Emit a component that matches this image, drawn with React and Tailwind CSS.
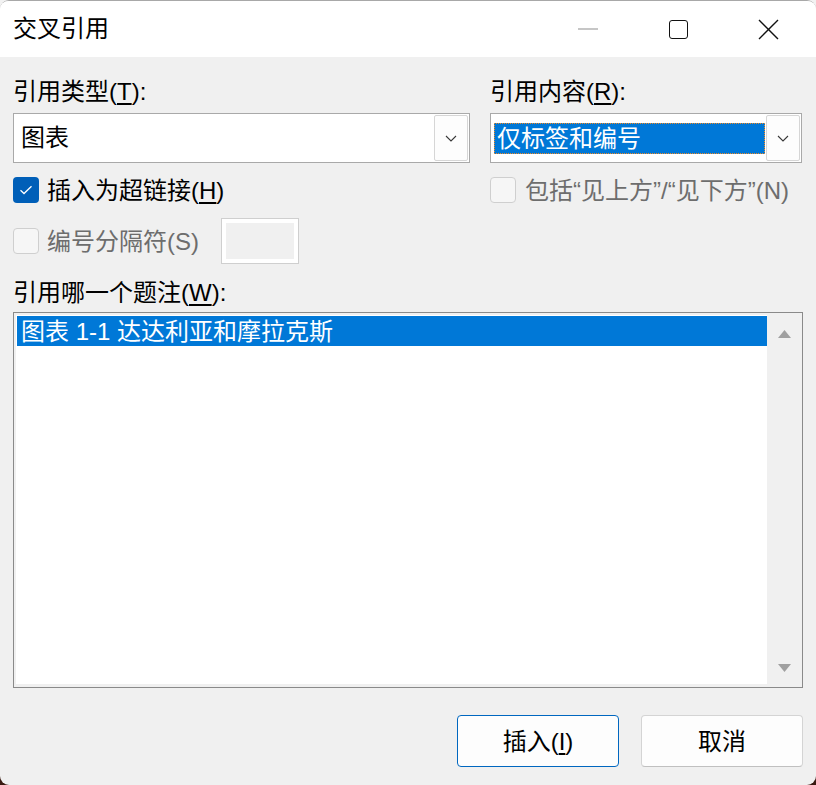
import React from "react";

function Chevron() {
  return (
    <svg width="12" height="7" viewBox="0 0 12 7" fill="none">
      <path d="M1 1 L6 6 L11 1" stroke="#3a3a3a" strokeWidth="1.1" />
    </svg>
  );
}

function ComboButton() {
  return (
    <div className="flex h-[46px] w-[34px] items-center justify-center rounded-[2px] border border-[#d6d6d6] bg-[#fdfdfd]">
      <Chevron />
    </div>
  );
}

function CheckBox({ checked }) {
  if (checked) {
    return (
      <div className="flex h-[26px] w-[26px] shrink-0 items-center justify-center rounded-[4px] bg-[#005fb8]">
        <svg width="14" height="10" viewBox="0 0 14 10" fill="none">
          <path d="M1.5 5.2 L5 8.5 L12.5 1.2" stroke="#ffffff" strokeWidth="1.3" />
        </svg>
      </div>
    );
  }
  return <div className="h-[26px] w-[26px] shrink-0 rounded-[4px] border border-[#cfcfcf] bg-[#f6f6f6]" />;
}

export default function App() {
  return (
    <div className="h-[785px] w-[816px] bg-linear-to-b from-[#f2f2f2] from-50% to-[#3a1a12] to-50% font-['Liberation_Sans','Noto_Sans_CJK_SC',sans-serif] text-[24px] text-black">
      <div className="flex h-full flex-col overflow-hidden rounded-[9px] border-t border-[#a8a8a8] bg-[#f0f0f0]">
        {/* Title bar */}
        <div className="flex h-[56px] shrink-0 items-center bg-white pl-[13px]">
          <div className="leading-[30px]">交叉引用</div>
          <div className="ml-auto flex h-full items-center">
            <div className="flex w-[92px] items-center justify-center pl-[4px]">
              <div className="h-[1.5px] w-[20px] bg-[#c6c6c6]" />
            </div>
            <div className="flex w-[92px] items-center justify-center">
              <div className="h-[19px] w-[19px] rounded-[3px] border-[1.6px] border-[#111]" />
            </div>
            <div className="flex w-[92px] items-center justify-center pr-[4px]">
              <svg width="21" height="21" viewBox="0 0 21 21" fill="none">
                <path d="M1 1 L20 20 M20 1 L1 20" stroke="#111" strokeWidth="1.4" />
              </svg>
            </div>
          </div>
        </div>

        {/* Body */}
        <div className="flex flex-1 flex-col px-[13px] pt-[20px]">
          <div className="grid grid-cols-[457px_312px] gap-x-[20px]">
            <div className="leading-[29px]">
              引用类型(<span className="underline underline-offset-[3px]">T</span>):
            </div>
            <div className="leading-[29px]">
              引用内容(<span className="underline underline-offset-[3px]">R</span>):
            </div>

            {/* Combo 1 */}
            <div className="mt-[7px] flex h-[50px] items-center border border-[#a9a9a9] bg-white pl-[7px] pr-[1px]">
              <div className="flex-1 leading-[30px]">图表</div>
              <ComboButton />
            </div>
            {/* Combo 2 */}
            <div className="mt-[7px] flex h-[50px] items-center border border-[#a9a9a9] bg-white pl-[3px] pr-[1px]">
              <div className="mr-[1px] flex h-[31px] flex-1 items-center border border-dotted border-[#f08a24] bg-[#0078d7] pl-[2px] leading-[29px] text-white">
                仅标签和编号
              </div>
              <ComboButton />
            </div>

            {/* Checkbox row */}
            <div className="mt-[14px] flex h-[26px] items-center gap-[8px]">
              <CheckBox checked />
              <div className="leading-[29px]">
                插入为超链接(<span className="underline underline-offset-[3px]">H</span>)
              </div>
            </div>
            <div className="mt-[14px] flex h-[26px] items-center gap-[9px]">
              <CheckBox />
              <div className="leading-[29px] text-[#6d6d6d]">包括“见上方”/“见下方”(N)</div>
            </div>

            {/* Separator row */}
            <div className="mt-[15px] flex h-[46px] items-center">
              <div className="flex w-[208px] items-center gap-[8px]">
                <CheckBox />
                <div className="leading-[29px] text-[#6d6d6d]">编号分隔符(S)</div>
              </div>
              <div className="h-[46px] w-[78px] border border-[#cfcfcf] bg-white p-[4px]">
                <div className="h-full w-full bg-[#f0f0f0]" />
              </div>
            </div>
            <div />
          </div>

          <div className="mt-[14px] leading-[29px]">
            引用哪一个题注(<span className="underline underline-offset-[3px]">W</span>):
          </div>

          {/* List box */}
          <div className="mt-[5px] flex h-[376px] border border-[#8a8a8a] bg-[#f0f0f0] pb-[3px] pl-[2px] pt-[2px]">
            <div className="flex-1 bg-white pl-[1px] pt-[1px]">
              <div className="flex h-[30px] items-center bg-[#0078d7] pl-[4px] leading-[29px] text-white">
                图表 1-1 达达利亚和摩拉克斯
              </div>
            </div>
            <div className="flex w-[35px] flex-col items-center justify-between pb-[12px] pt-[15px]">
              <svg width="13" height="8" viewBox="0 0 13 8">
                <path d="M6.5 0 L13 8 L0 8 Z" fill="#a0a0a0" />
              </svg>
              <svg width="13" height="8" viewBox="0 0 13 8">
                <path d="M0 0 L13 0 L6.5 8 Z" fill="#a0a0a0" />
              </svg>
            </div>
          </div>

          {/* Buttons */}
          <div className="mt-[27px] flex justify-end gap-[22px]">
            <button className="flex h-[52px] w-[162px] items-center justify-center rounded-[4px] border border-[#0067c0] bg-[#fdfdfd] leading-[29px]">
              插入(<span className="underline underline-offset-[3px]">I</span>)
            </button>
            <button className="flex h-[52px] w-[162px] items-center justify-center rounded-[4px] border border-[#d4d4d4] border-b-[#c0c0c0] bg-[#fdfdfd] leading-[29px]">
              取消
            </button>
          </div>
        </div>
      </div>
    </div>
  );
}
